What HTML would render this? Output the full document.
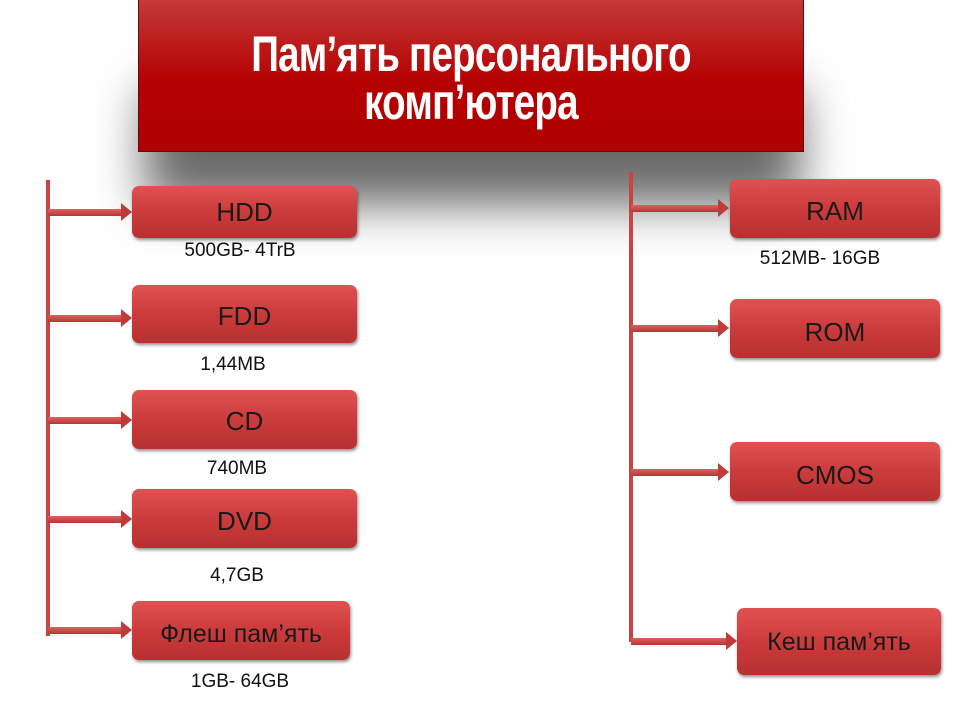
<!DOCTYPE html>
<html><head><meta charset="utf-8"><style>
body{margin:0;width:960px;height:720px;background:#fff;position:relative;overflow:hidden;font-family:"Liberation Sans","DejaVu Sans",sans-serif}
.shadow{position:absolute;left:145px;top:90px;width:655px;height:115px;background:#6a6a6a;filter:blur(24px)}
.title{position:absolute;left:138px;top:-2px;width:666px;height:154px;background:linear-gradient(#c43a3a,#b50000 55%,#b00000);border:1px solid #5a1010;box-sizing:border-box;color:#fff;text-align:center}
.title div{font-family:"Liberation Sans Narrow","Liberation Sans",sans-serif;font-weight:bold;font-size:50px;line-height:48px;transform:scaleX(0.77);letter-spacing:-1px;white-space:nowrap;margin-left:-100px;margin-right:-100px}
.box{position:absolute;background:linear-gradient(#e05252,#cc3b3b 50%,#b83030);border-radius:7px;box-shadow:1px 2px 3px rgba(0,0,0,.45);color:#1a1a1a;text-align:center;font-size:26px;font-family:"Liberation Sans","DejaVu Sans",sans-serif}
.vl{position:absolute;width:4px;background:#c84444}
.ar{position:absolute;height:7px;background:linear-gradient(#e06060,#b83434);}
.ar:after{content:"";position:absolute;right:-10px;top:-6px;border-left:11px solid #c03a3a;border-top:9.5px solid transparent;border-bottom:9.5px solid transparent}
.lb{position:absolute;font-size:19px;color:#111;text-align:center;width:200px}
</style></head><body>
<div class="shadow"></div>
<div class="title"><div style="margin-top:31px">Пам’ять персональнoго</div><div>комп’ютера</div></div>

<div class="vl" style="left:46px;top:180px;height:456px"></div>
<div class="ar" style="left:48px;top:209px;width:74px"></div>
<div class="ar" style="left:48px;top:315px;width:74px"></div>
<div class="ar" style="left:48px;top:417px;width:74px"></div>
<div class="ar" style="left:48px;top:516px;width:74px"></div>
<div class="ar" style="left:48px;top:627px;width:74px"></div>

<div class="box" style="left:132px;top:186px;width:225px;height:52px;line-height:52px">HDD</div>
<div class="box" style="left:132px;top:285px;width:225px;height:58px;line-height:62px">FDD</div>
<div class="box" style="left:132px;top:390px;width:225px;height:59px;line-height:62px">CD</div>
<div class="box" style="left:132px;top:489px;width:225px;height:59px;line-height:64px">DVD</div>
<div class="box" style="left:132px;top:601px;width:218px;height:59px;line-height:66px;font-size:25px">Флеш пам’ять</div>

<div class="lb" style="left:140px;top:240px">500GB- 4TrB</div>
<div class="lb" style="left:133px;top:354px">1,44MB</div>
<div class="lb" style="left:137px;top:458px">740MB</div>
<div class="lb" style="left:137px;top:565px">4,7GB</div>
<div class="lb" style="left:140px;top:671px">1GB- 64GB</div>

<div class="vl" style="left:629px;top:172px;height:470px"></div>
<div class="ar" style="left:631px;top:205px;width:88px"></div>
<div class="ar" style="left:631px;top:325px;width:88px"></div>
<div class="ar" style="left:631px;top:469px;width:88px"></div>
<div class="ar" style="left:631px;top:638px;width:96px"></div>

<div class="box" style="left:730px;top:179px;width:210px;height:59px;line-height:64px">RAM</div>
<div class="box" style="left:730px;top:299px;width:210px;height:59px;line-height:66px">ROM</div>
<div class="box" style="left:730px;top:442px;width:210px;height:59px;line-height:66px">CMOS</div>
<div class="box" style="left:737px;top:608px;width:204px;height:67px;line-height:68px;font-size:25px">Кеш пам’ять</div>

<div class="lb" style="left:720px;top:248px">512MB- 16GB</div>
</body></html>
